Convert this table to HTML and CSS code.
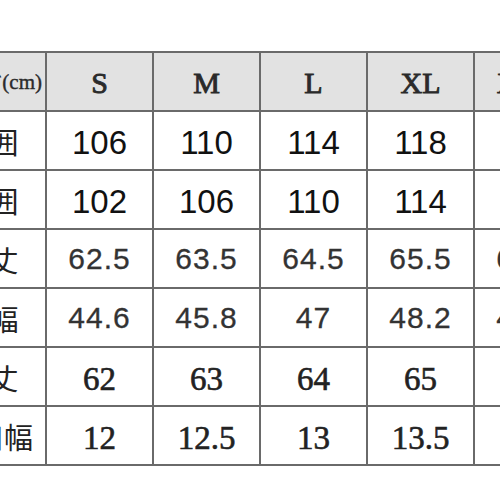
FILE: index.html
```html
<!DOCTYPE html>
<html lang="ja">
<head>
<meta charset="utf-8">
<link rel="stylesheet" href="styles.css">
</head>
<body>
<div class="chart">
  <div class="cell head label-head">サイズ<span class="cm">(cm)</span></div>
  <div class="cell head">S</div>
  <div class="cell head">M</div>
  <div class="cell head">L</div>
  <div class="cell head">XL</div>
  <div class="cell head">XXL</div>

  <div class="cell label">胸囲</div>
  <div class="cell big">106</div>
  <div class="cell big">110</div>
  <div class="cell big">114</div>
  <div class="cell big">118</div>
  <div class="cell big">122</div>

  <div class="cell label">胴囲</div>
  <div class="cell big">102</div>
  <div class="cell big">106</div>
  <div class="cell big">110</div>
  <div class="cell big">114</div>
  <div class="cell big">118</div>

  <div class="cell label">着丈</div>
  <div class="cell mid">62.5</div>
  <div class="cell mid">63.5</div>
  <div class="cell mid">64.5</div>
  <div class="cell mid">65.5</div>
  <div class="cell mid">66.5</div>

  <div class="cell label">身幅</div>
  <div class="cell mid">44.6</div>
  <div class="cell mid">45.8</div>
  <div class="cell mid">47</div>
  <div class="cell mid">48.2</div>
  <div class="cell mid">49.4</div>

  <div class="cell label">袖丈</div>
  <div class="cell serif">62</div>
  <div class="cell serif">63</div>
  <div class="cell serif">64</div>
  <div class="cell serif">65</div>
  <div class="cell serif">66</div>

  <div class="cell label">袖口幅</div>
  <div class="cell serif">12</div>
  <div class="cell serif">12.5</div>
  <div class="cell serif">13</div>
  <div class="cell serif">13.5</div>
  <div class="cell serif">14</div>
</div>
</body>
</html>
```

FILE: styles.css
```css
html, body {
  margin: 0;
  padding: 0;
  background: #ffffff;
  overflow: hidden;
  width: 500px;
  height: 500px;
}

.chart {
  display: grid;
  grid-template-columns: 111px repeat(5, 105px);
  grid-auto-rows: 57px;
  gap: 2px;
  padding: 2px 0;
  background: #6a6a6a;
  width: max-content;
  margin-top: 51px;
  margin-left: -66px;
}

.cell {
  background: #ffffff;
  display: flex;
  align-items: center;
  justify-content: center;
  white-space: nowrap;
  color: #111111;
}

.head {
  background: #e2e2e2;
  font-family: "Liberation Serif", serif;
  font-weight: normal;
  font-size: 30px;
  color: #2a2a2a;
  -webkit-text-stroke: 0.9px #2a2a2a;
  padding-top: 2px;
  box-sizing: border-box;
}

.label-head {
  font-family: "Noto Sans CJK JP", sans-serif;
  font-size: 22px;
  -webkit-text-stroke: 0;
  color: #2a2a2a;
}

.cm {
  font-family: "Liberation Serif", serif;
  font-size: 21px;
  -webkit-text-stroke: 0.4px #2a2a2a;
}

.label {
  font-family: "Noto Sans CJK JP", sans-serif;
  font-size: 29px;
  color: #222222;
}

.big {
  font-family: "Liberation Sans", sans-serif;
  font-size: 33px;
  color: #111111;
  padding-top: 4px;
  box-sizing: border-box;
}

.mid {
  font-family: "Liberation Sans", sans-serif;
  font-size: 30px;
  letter-spacing: 1px;
  color: #333333;
  -webkit-text-stroke: 0.3px #333333;
}

.serif {
  font-family: "Liberation Serif", serif;
  font-size: 33px;
  color: #222222;
  -webkit-text-stroke: 0.6px #222222;
  padding-top: 6px;
  box-sizing: border-box;
}
```
